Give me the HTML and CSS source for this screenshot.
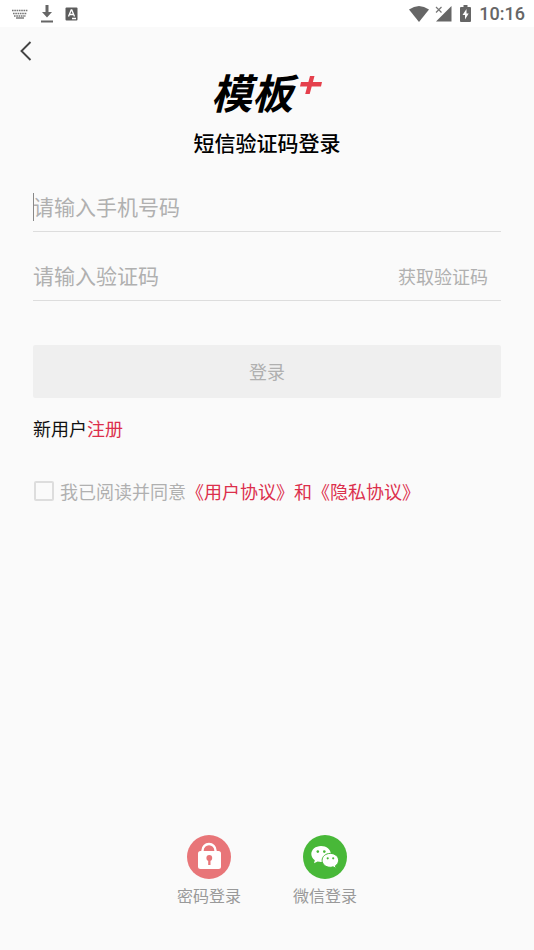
FILE: index.html
```html
<!DOCTYPE html>
<html lang="zh-CN">
<head>
<meta charset="utf-8">
<meta name="viewport" content="width=device-width, initial-scale=1">
<title>短信验证码登录</title>
<link rel="stylesheet" href="styles.css">
</head>
<body>
<header class="status">
  <div class="status-group status-left">
    <svg width="18" height="10" viewBox="0 0 18 10" aria-hidden="true">
      <path d="M1 1.5h16M2 4.5h14M3 7h12" fill="none" stroke="#757575" stroke-width="1.5" stroke-dasharray="1.6 .7"/>
      <path d="M5 9h8" stroke="#757575" stroke-width="1.4"/>
    </svg>
    <svg width="14" height="18" viewBox="0 0 14 18" aria-hidden="true">
      <path d="M5.500 0h3v7H12l-5 5.500L2 7h3.500zM1 15.500h12v2H1z" fill="#666"/>
    </svg>
    <svg width="13" height="14" viewBox="0 0 13 14" aria-hidden="true">
      <rect x=".5" y=".5" width="12" height="13" rx="1" fill="#5c5c5c"/>
      <path d="M3.500 9.500 6.200 3h.6l2.700 6.500M4.600 7.500h3.800M7 11.500h4" fill="none" stroke="#fff" stroke-width="1.300"/>
    </svg>
  </div>
  <div class="status-group status-right">
    <svg width="20" height="16" viewBox="0 0 20 16" aria-hidden="true">
      <path d="M0 3.500Q10-3.500 20 3.500L10 16z" fill="#666"/>
    </svg>
    <svg width="17" height="17" viewBox="0 0 17 17" aria-hidden="true">
      <path d="M16.500 1v15.500H1z" fill="#666"/>
      <path d="M0 0h8l1 8-9-1z" fill="#fff"/>
      <path d="m1 2 5.500 5.500M6.500 2 1 7.500" stroke="#777" stroke-width="1.200"/>
    </svg>
    <svg class="battery" width="11" height="17" viewBox="0 0 11 17" aria-hidden="true">
      <path d="M3.500 0h4v2H10q1 0 1 1v13q0 1-1 1H1q-1 0-1-1V3q0-1 1-1h2.500z" fill="#666"/>
      <path d="M6.500 4 2.500 10H5v4.500L8.700 8.500H6.500z" fill="#fff"/>
    </svg>
    <time class="clock">10:16</time>
  </div>
</header>
<nav class="nav">
  <button class="back" type="button" aria-label="返回">
    <svg width="12" height="20" viewBox="0 0 12 20" aria-hidden="true">
      <path d="M10.500 1 1.500 10l9 9" fill="none" stroke="#444" stroke-width="1.900"/>
    </svg>
  </button>
</nav>
<main class="main">
  <div class="logo">
    <span class="logo-name">模板</span>
    <svg class="logo-plus" width="24" height="20" viewBox="0 0 24 20" aria-hidden="true">
      <path d="M11 1h4.500l-1.600 6H23l-1 4.500h-9.300L10.700 19H6.200l2-7.500H1L2 7h7.400z" fill="#e5404c"/>
    </svg>
  </div>
  <h1 class="title">短信验证码登录</h1>
  <form class="form">
    <div class="field field-active">
      <input class="input" type="tel" placeholder="请输入手机号码" aria-label="手机号码">
    </div>
    <div class="field">
      <input class="input" type="text" placeholder="请输入验证码" aria-label="验证码">
      <button class="code" type="button">获取验证码</button>
    </div>
    <button class="submit" type="submit" disabled>登录</button>
    <p class="register">新用户<a class="link" href="#register">注册</a></p>
    <div class="agreement">
      <input class="check" id="agree" type="checkbox">
      <label for="agree">我已阅读并同意</label>
      <span class="terms"><a class="link" href="#terms">《用户协议》</a>和<a class="link" href="#privacy">《隐私协议》</a></span>
    </div>
  </form>
</main>
<footer class="providers">
  <button class="provider" type="button">
    <svg width="46" height="46" viewBox="0 0 46 46" aria-hidden="true">
      <circle cx="23" cy="23" r="22" fill="#e87578"/>
      <path d="M16.500 19v-2.500a6.500 6.500 0 0 1 13 0V19" fill="none" stroke="#fff" stroke-width="2.400"/>
      <rect x="12" y="17" width="23" height="18" rx="2.500" fill="#fff"/>
      <circle cx="23.300" cy="24" r="2.900" fill="#e87578"/>
      <path d="M22.200 25h2.300v6h-2.300z" fill="#e87578"/>
    </svg>
    密码登录
  </button>
  <button class="provider" type="button">
    <svg width="46" height="46" viewBox="0 0 46 46" aria-hidden="true">
      <circle cx="23" cy="23" r="22" fill="#48b838"/>
      <path d="M19 12c-5.500 0-9.700 3.600-9.700 8 0 2.600 1.400 4.700 3.500 6.200L12 29.300l3.600-1.900c1.300.3 2.200.5 3.400.5 5.500 0 9.800-3.400 9.800-7.900S24.500 12 19 12z" fill="#fff"/>
      <path d="M28.300 19.400c-4.700 0-8.200 3.100-8.200 6.900s3.500 7 8.200 7c1 0 1.900-.2 2.800-.5l3.100 1.700-.8-2.700c1.900-1.300 3.200-3.200 3.200-5.500 0-3.800-3.600-6.900-8.300-6.900z" fill="#fff" stroke="#48b838"/>
      <g fill="#48b838"><circle cx="15.800" cy="17.600" r="1.300"/><circle cx="22.300" cy="17.600" r="1.300"/><circle cx="25.700" cy="24.300" r="1.100"/><circle cx="31.200" cy="24.300" r="1.100"/></g>
    </svg>
    微信登录
  </button>
</footer>
</body>
</html>
```
FILE: styles.css
```css
* {
  box-sizing: border-box;
}

body {
  display: flex;
  flex-direction: column;
  min-height: 100vh;
  margin: 0;
  background: #fafafa;
  color: #111;
  font-family: "Noto Sans CJK SC", sans-serif;
  font-size: 18px;
  line-height: 24px;
}

button,
input {
  margin: 0;
  padding: 0;
  border: 0;
  background: none;
  font: inherit;
}

svg {
  display: block;
}

.status {
  display: flex;
  justify-content: space-between;
  align-items: center;
  height: 27px;
  padding: 0 9px 0 11px;
  background: #fff;
}

.status-group {
  display: flex;
  align-items: center;
}

.status-left {
  gap: 11px;
}

.status-right {
  gap: 6px;
}

.battery {
  margin: 0 2px;
}

.clock {
  color: #666;
  font-family: Roboto, sans-serif;
  font-size: 18px;
  font-weight: 500;
}

.nav {
  display: flex;
  height: 44px;
  padding: 0 12px;
}

.back {
  display: grid;
  place-items: center;
  width: 28px;
  height: 48px;
}

.main {
  padding: 0 33px;
}

.logo {
  display: flex;
  justify-content: center;
  align-items: flex-start;
  height: 44px;
}

.logo-name {
  color: #000;
  font-size: 41px;
  font-style: italic;
  font-weight: 700;
  line-height: 40px;
}

.logo-plus {
  margin: 4px 0 0 6px;
}

.title {
  margin: 15px 0 29px;
  color: #000;
  font-size: 21px;
  font-weight: 500;
  line-height: 24px;
  text-align: center;
}

.field {
  position: relative;
  display: flex;
  align-items: center;
  height: 49px;
  margin-bottom: 20px;
  border-bottom: 1px solid #ddd;
}

.field-active::before {
  content: "";
  position: absolute;
  left: 0;
  width: 1px;
  height: 28px;
  background: #888;
}

.input {
  flex: 1;
  min-width: 0;
  height: 48px;
  padding-bottom: 2px;
  color: #111;
  font-size: 21px;
  outline: 0;
}

.input::placeholder {
  color: #b0b0b0;
  opacity: 1;
}

.code {
  padding: 0 13px;
  color: #b0b0b0;
}

.submit {
  display: block;
  width: 100%;
  height: 53px;
  margin-top: 44px;
  padding-bottom: 2px;
  border-radius: 2px;
  background: #efefef;
  color: #b0b0b0;
}

.register {
  margin: 18px 0 39px;
}

.link {
  color: inherit;
  text-decoration: none;
}

.register .link,
.terms {
  color: #dc2f4c;
}

.agreement {
  display: flex;
  align-items: center;
  color: #b0b0b0;
}

.check {
  appearance: none;
  width: 20px;
  height: 20px;
  margin: 0 6px 0 1px;
  border: 2px solid #ddd;
  border-radius: 2px;
}

.providers {
  display: flex;
  justify-content: center;
  gap: 52px;
  margin-top: auto;
  padding-bottom: 43px;
}

.provider {
  display: flex;
  flex-direction: column;
  align-items: center;
  gap: 3px;
  color: #999;
  font-size: 16px;
  line-height: 24px;
}
```
